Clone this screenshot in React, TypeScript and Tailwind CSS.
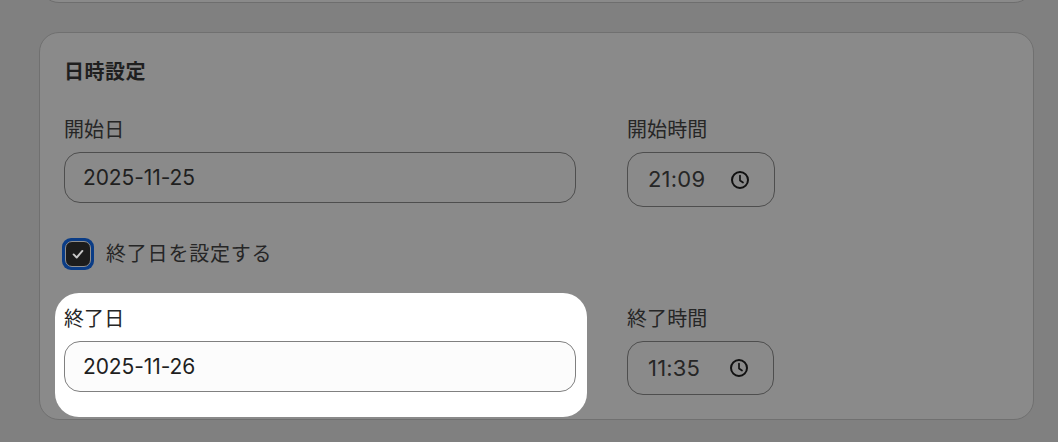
import React from 'react'

const font = "font-['Inter','Noto_Sans_CJK_JP',sans-serif]"

function ClockIcon() {
  return (
    <svg width="20" height="20" viewBox="0 0 20 20" fill="none" stroke="#111111" strokeWidth="2" strokeLinecap="round" strokeLinejoin="round">
      <circle cx="10" cy="10" r="8" />
      <path d="M10 5.5V10.5L13 12.5" strokeWidth="1.7" />
    </svg>
  )
}

function TimeField({ label, value, width, height }: { label: string; value: string; width: string; height: string }) {
  return (
    <div>
      <div className="h-[28px] text-[20px] leading-[30px] tracking-[0.1px] text-[#262626] mb-[9px]">{label}</div>
      <div className={`${width} ${height} border border-[#4e4e4e] rounded-[16px] flex items-center pl-[20px] pr-[24px] justify-between`}>
        <span className="text-[22px] tracking-[0.2px] text-[#262626]">{value}</span>
        <ClockIcon />
      </div>
    </div>
  )
}

export default function App() {
  return (
    <main className={`${font} w-[1058px] h-[442px] overflow-hidden bg-[#808080] pl-[39px] pr-[24px]`}>
      <div className="h-[40px] -mt-[37px] bg-[#8a8a8a] border border-[#6e6e6e] rounded-[20px]" />
      <section className="mt-[29px] h-[388px] bg-[#8a8a8a] border border-[#707070] rounded-[20px] px-[24px] pt-[24px]">
        <h2 className="h-[30px] text-[20px] leading-[30px] font-bold tracking-[0.5px] text-[#1f1f1f] mb-[28px]">日時設定</h2>

        <div className="flex items-start gap-[51px]">
          <div className="w-[512px]">
            <div className="h-[28px] text-[20px] leading-[30px] tracking-[0.1px] text-[#262626] mb-[9px]">開始日</div>
            <div className="h-[51px] border border-[#4e4e4e] rounded-[16px] flex items-center px-[18px] text-[21px] tracking-[-0.1px] text-[#1f1f1f]">2025-11-25</div>
          </div>
          <TimeField label="開始時間" value="21:09" width="w-[148px]" height="h-[55px]" />
        </div>

        <div className="mt-[31px] flex items-center h-[32px] -ml-[2px] gap-[12px]">
          <div className="w-[32px] h-[32px] rounded-[9px] bg-[#0a3c86] p-[3px]">
            <div className="w-full h-full rounded-[7px] bg-[#1c1c1c] border border-[#8f8f8f] flex items-center justify-center">
              <svg width="14" height="14" viewBox="0 0 16 16" fill="none" stroke="#c8c8c8" strokeWidth="2.2" strokeLinecap="round" strokeLinejoin="round">
                <path d="M3 8.5L6.5 12L13 4.5" />
              </svg>
            </div>
          </div>
          <span className="text-[20px] leading-[30px] tracking-[0.8px] text-[#262626]">終了日を設定する</span>
        </div>

        <div className="mt-[34px] flex items-start gap-[51px]">
          <div className="w-[532px] -ml-[9px] -mr-[11px] -mt-[11px] -mb-[25px] bg-white rounded-[24px] pt-[11px] pb-[25px] pl-[9px] pr-[11px]">
            <div className="h-[28px] text-[20px] leading-[30px] tracking-[0.1px] text-[#262626] mb-[9px]">終了日</div>
            <div className="h-[51px] bg-[#fcfcfc] border border-[#808080] rounded-[16px] flex items-center px-[18px] text-[21px] tracking-[-0.1px] text-[#1f1f1f]">2025-11-26</div>
          </div>
          <TimeField label="終了時間" value="11:35" width="w-[147px]" height="h-[54px]" />
        </div>
      </section>
    </main>
  )
}
